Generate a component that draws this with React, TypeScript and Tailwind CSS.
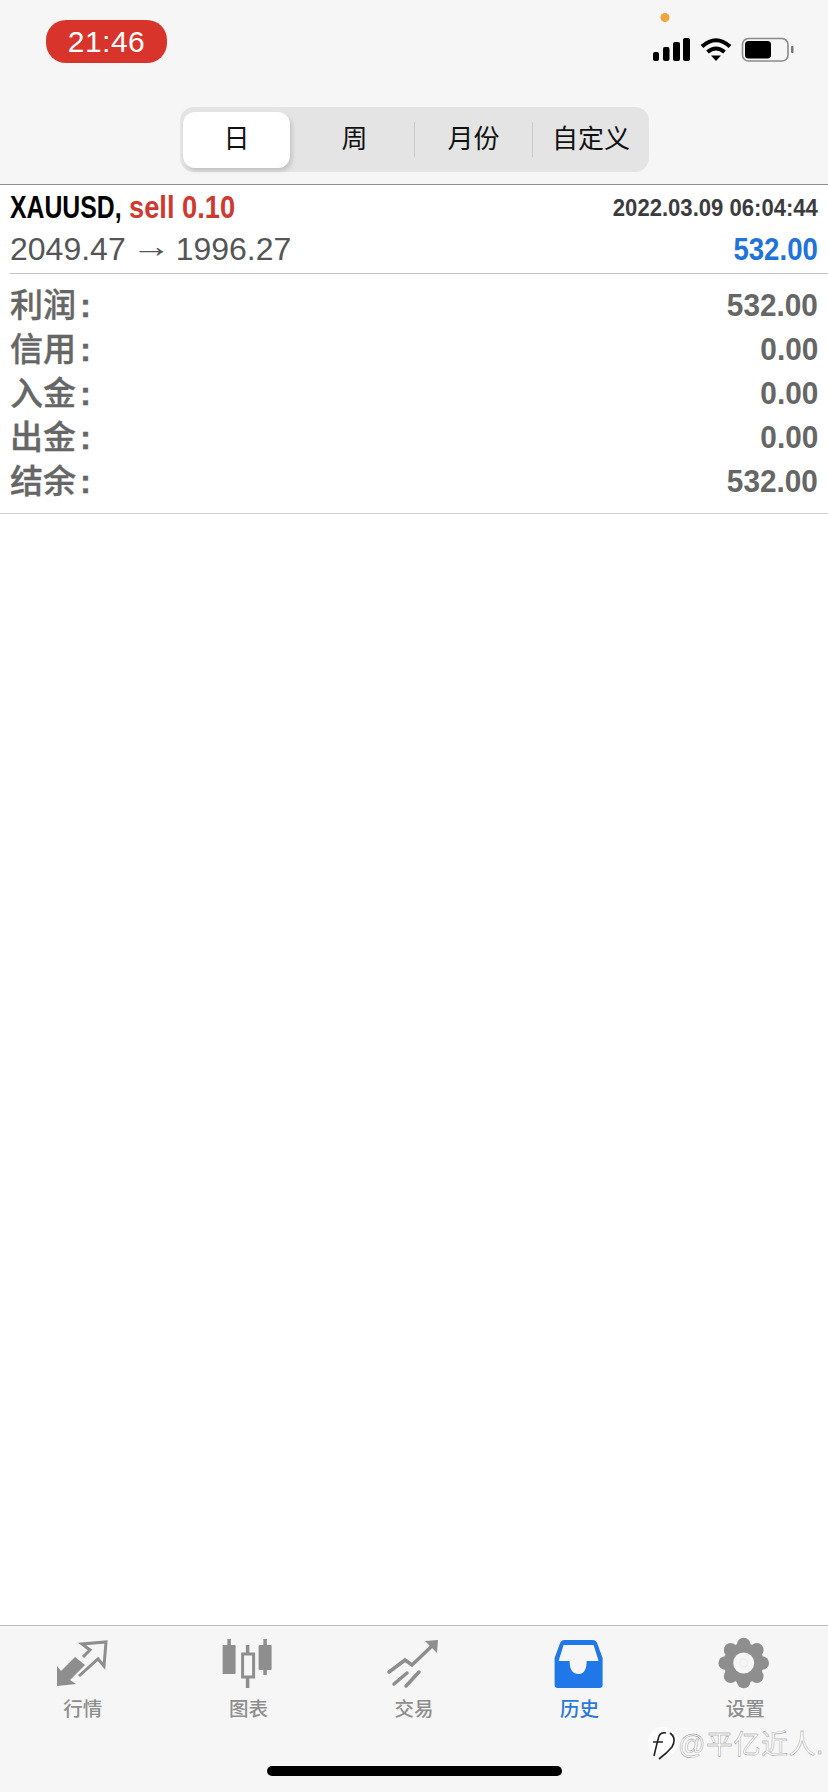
import React from 'react';

const FONT = "font-['Liberation_Sans','Noto_Sans_CJK_SC',sans-serif]";

const summary = [
  { label: '利润', value: '532.00' },
  { label: '信用', value: '0.00' },
  { label: '入金', value: '0.00' },
  { label: '出金', value: '0.00' },
  { label: '结余', value: '532.00' },
];

function StatusIcons() {
  return (
    <svg width="150" height="65" viewBox="0 0 150 65">
      <circle cx="20" cy="12.5" r="4.5" fill="#eea63a" />
      <rect x="8" y="47" width="6" height="9" rx="2" fill="#000" />
      <rect x="18" y="42" width="6.5" height="14" rx="2" fill="#000" />
      <rect x="28" y="37" width="7" height="19" rx="2" fill="#000" />
      <rect x="38" y="33" width="7" height="23" rx="2" fill="#000" />
      <path d="M57 41.5Q71 29 85 41.5" fill="none" stroke="#000" strokeWidth="4" />
      <path d="M62.5 47Q71 40 79.5 47" fill="none" stroke="#000" strokeWidth="4" />
      <path d="M66 50.5H76L71 56Z" fill="#000" />
      <rect x="97.5" y="33.5" width="45.5" height="22.5" rx="6" fill="none" stroke="#8a8a8a" strokeWidth="1.6" />
      <rect x="100" y="36" width="26" height="17.5" rx="3.5" fill="#000" />
      <rect x="146" y="41" width="2.5" height="7" rx="1" fill="#777" />
    </svg>
  );
}

function QuotesIcon() {
  return (
    <svg width="70" height="65" viewBox="-2 0 70 65">
      <path d="M7 36V56L26 54L20 50L35 35L25 27L11 41Z" fill="#8e8e8e" />
      <path d="M33 27L40 20L32 14L56 12L54 36L48 29L29 46" fill="none" stroke="#8e8e8e" strokeWidth="3" />
    </svg>
  );
}

function ChartIcon() {
  return (
    <svg width="70" height="65" viewBox="-1.6 0 70 65">
      <path d="M14.5 9V44M50.5 9V45M33 15V58" stroke="#8e8e8e" strokeWidth="3.5" fill="none" />
      <rect x="8" y="15" width="13" height="29" rx="1" fill="#8e8e8e" />
      <rect x="44" y="15" width="13" height="25" rx="1" fill="#8e8e8e" />
      <rect x="28" y="24" width="11" height="23" fill="#f6f6f6" stroke="#8e8e8e" strokeWidth="3" />
    </svg>
  );
}

function TradeIcon() {
  return (
    <svg width="70" height="65" viewBox="-1 0 70 65">
      <path d="M9 42L25 30L32 35L53 15" fill="none" stroke="#8e8e8e" strokeWidth="3.5" strokeLinecap="round" />
      <path d="M45 11L58 10L57 23Z" fill="#8e8e8e" />
      <path d="M14 54L27 43M26 56L39 42" fill="none" stroke="#8e8e8e" strokeWidth="3.5" strokeLinecap="round" />
    </svg>
  );
}

function HistoryIcon() {
  return (
    <svg width="70" height="65" viewBox="0.4 0 70 65">
      <path
        fillRule="evenodd"
        fill="#1f77e8"
        d="M20 10H48Q51 10 52.5 13L58 28V55Q58 58 55 58H13Q10 58 10 55V28L15.5 13Q17 10 20 10ZM19 15L14 31H25Q25 44 34 44Q42 44 42 31H54L49 15Z"
      />
    </svg>
  );
}

function SettingsIcon() {
  const lobes = [0, 45, 90, 135, 180, 225, 270, 315];
  return (
    <svg width="70" height="65" viewBox="-0.2 0 70 65">
      <circle cx="33.5" cy="33" r="20" fill="#8e8e8e" />
      {lobes.map((a) => (
        <circle
          key={a}
          cx={33.5 + 18.5 * Math.cos((a * Math.PI) / 180)}
          cy={33 + 18.5 * Math.sin((a * Math.PI) / 180)}
          r="6.8"
          fill="#8e8e8e"
        />
      ))}
      <circle cx="33.5" cy="33" r="10.5" fill="#f6f6f6" />
      <circle cx="33.5" cy="33" r="4" fill="none" stroke="#ececec" strokeWidth="1" />
    </svg>
  );
}

const tabs = [
  { label: '行情', icon: <QuotesIcon /> },
  { label: '图表', icon: <ChartIcon /> },
  { label: '交易', icon: <TradeIcon /> },
  { label: '历史', icon: <HistoryIcon />, active: true },
  { label: '设置', icon: <SettingsIcon /> },
];

function Watermark() {
  return (
    <div className="absolute left-[642px] top-[1720px] flex items-center h-[50px]">
      <svg width="36" height="44" viewBox="0 0 36 44" className="shrink-0">
        <circle cx="21" cy="19" r="15" fill="#fff" />
        <path
          d="M12 33Q15 20 17 13Q19 9 24 10M11 19H21M28 10Q35 15 30 24Q25 30 17 36"
          fill="none"
          stroke="#222"
          strokeWidth="1.6"
        />
      </svg>
      <span className="text-[27px] tracking-[0.5px] leading-none text-white [-webkit-text-stroke:0.4px_#8a8a8a] whitespace-nowrap">
        @平亿近人.
      </span>
    </div>
  );
}

export default function App() {
  return (
    <div className={`${FONT} relative w-[828px] h-[1792px] bg-white flex flex-col overflow-hidden`}>
      <header className="bg-[#f6f6f6] h-[185px] border-b border-[#8f8f8f] flex flex-col shrink-0">
        <div className="flex justify-between items-start pt-[5px] pl-[46px] pr-[33px]">
          <div className="mt-[15px] w-[121px] h-[43px] rounded-[20px] bg-[#d9342b] flex items-center justify-center text-white text-[30px] tracking-[0.5px]">
            21:46
          </div>
          <StatusIcons />
        </div>
        <div className="mt-[37px] ml-[180px] w-[469px] h-[65px] rounded-[14px] bg-[#e4e4e4] flex items-center text-[26px] text-[#111]">
          <div className="ml-[3px] w-[107px] h-[56px] rounded-[12px] bg-white shadow-[2px_3px_4px_rgba(0,0,0,0.15)] flex items-center justify-center">
            日
          </div>
          <div className="w-[124px] pl-[5px] flex justify-center">周</div>
          <div className="w-px h-[35px] bg-[#c9c9c9]" />
          <div className="w-[117px] flex justify-center">月份</div>
          <div className="w-px h-[35px] bg-[#c9c9c9]" />
          <div className="flex-1 flex justify-center">自定义</div>
        </div>
      </header>

      <main className="flex-1">
        <div className="pl-[10px] h-[89px]">
          <div className="h-[89px] border-b border-[#c4c4c4] flex flex-col pr-[10px]">
            <div className="flex justify-between items-center h-[44px] pt-[1px]">
              <div className="font-bold text-[31px] leading-none whitespace-nowrap">
                <span className="inline-block origin-left scale-x-[0.8] text-black">XAUUSD,</span>
                <span className="inline-block origin-left scale-x-[0.88] text-[#cf3a30] ml-[-21px]">sell 0.10</span>
              </div>
              <div className="font-bold text-[24px] origin-right scale-x-[0.92] text-[#3c3c40] whitespace-nowrap">
                2022.03.09 06:04:44
              </div>
            </div>
            <div className="flex justify-between items-center h-[40px]">
              <div className="flex items-center text-[32px] leading-none text-[#555] whitespace-nowrap">
                <span>2049.47</span>
                <span className="mx-[9px] -translate-y-[3px] scale-x-[1.25]">→</span>
                <span>1996.27</span>
              </div>
              <div className="font-bold text-[31px] leading-none origin-right scale-x-[0.89] text-[#2173dc]">532.00</div>
            </div>
          </div>
        </div>
        <div className="pl-[10px] pr-[10px] pt-[9px] pb-[10px] border-b border-[#d0d0d0]">
          {summary.map((row) => (
            <div key={row.label} className="h-[44px] flex justify-between items-center text-[#666]">
              <div className="text-[33px] font-medium leading-none [-webkit-text-stroke:0.35px_#666]">
                {row.label}
                <span className="font-bold ml-[4px]">:</span>
              </div>
              <div className="text-[32px] font-bold origin-right scale-x-[0.93] leading-none">{row.value}</div>
            </div>
          ))}
        </div>
      </main>

      <nav className="h-[167px] bg-[#f6f6f6] border-t border-[#bcbcbc] flex flex-col shrink-0">
        <div className="flex pt-[4px]">
          {tabs.map((tab) => (
            <div key={tab.label} className="flex-1 flex flex-col items-center">
              {tab.icon}
              <span
                className={`mt-[4px] text-[19.5px] leading-[20px] font-medium ${
                  tab.active ? 'text-[#2a78d8]' : 'text-[#8e8e8e]'
                }`}
              >
                {tab.label}
              </span>
            </div>
          ))}
        </div>
        <div className="mt-[47px] mx-auto w-[295px] h-[10px] rounded-full bg-black" />
      </nav>

      <Watermark />
    </div>
  );
}
